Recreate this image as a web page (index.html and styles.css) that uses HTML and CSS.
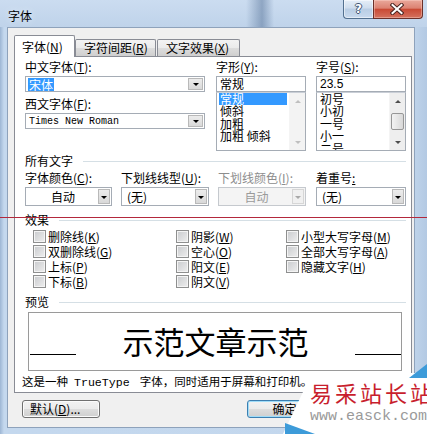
FILE: index.html
```html
<!DOCTYPE html>
<html lang="zh-CN">
<head>
<meta charset="utf-8">
<title>字体</title>
<link rel="stylesheet" href="styles.css">
</head>
<body>
<div class="window">
  <div class="titlebar">
    <span class="title">字体</span>
    <div class="caption">
      <div class="cap-help"><span class="qmark">?</span></div>
      <div class="cap-close">
        <svg width="14" height="12" viewBox="0 0 14 12">
          <path d="M2.5 2 L11.5 10 M11.5 2 L2.5 10" stroke="#4a2420" stroke-width="4" stroke-linecap="square"/>
          <path d="M2.5 2 L11.5 10 M11.5 2 L2.5 10" stroke="#ffffff" stroke-width="2" stroke-linecap="square"/>
        </svg>
      </div>
    </div>
  </div>
  <div class="client">
    <div class="tabs">
      <div class="tab active t1">字体(<u>N</u>)</div>
      <div class="tab t2">字符间距(<u>R</u>)</div>
      <div class="tab t3">文字效果(<u>X</u>)</div>
    </div>
    <div class="panel">
      <div class="toprow">
        <div class="col-left">
          <div class="lbl">中文字体(<u>T</u>):</div>
          <div class="combo"><span class="cval"><span class="sel">宋体</span></span><span class="dd"></span></div>
          <div class="lbl lbl2">西文字体(<u>F</u>):</div>
          <div class="combo"><span class="cval mono">Times New Roman</span><span class="dd"></span></div>
        </div>
        <div class="col-style">
          <div class="lbl">字形(<u>Y</u>):</div>
          <div class="tbox">常规</div>
          <div class="lbox">
            <div class="items style-items">
              <div class="item selected">常规</div>
              <div class="item">倾斜</div>
              <div class="item">加粗</div>
              <div class="item">加粗 倾斜</div>
            </div>
            <div class="sbar disabled">
              <div class="sbtn"><span class="arr-up"></span></div>
              <div class="strack"></div>
              <div class="sbtn"><span class="arr-down"></span></div>
            </div>
          </div>
        </div>
        <div class="col-size">
          <div class="lbl">字号(<u>S</u>):</div>
          <div class="tbox num">23.5</div>
          <div class="lbox">
            <div class="items size-items">
              <div class="item">初号</div>
              <div class="item">小初</div>
              <div class="item">一号</div>
              <div class="item">小一</div>
              <div class="item">二号</div>
            </div>
            <div class="sbar">
              <div class="sbtn"><span class="arr-up"></span></div>
              <div class="strack"><div class="thumb"></div></div>
              <div class="sbtn"><span class="arr-down"></span></div>
            </div>
          </div>
        </div>
      </div>

      <div class="group">所有文字</div>
      <div class="fourrow">
        <div class="field f1">
          <div class="lbl">字体颜色(<u>C</u>):</div>
          <div class="ccombo"><span class="cval center">自动</span><span class="dd"></span></div>
        </div>
        <div class="field f2">
          <div class="lbl">下划线线型(<u>U</u>):</div>
          <div class="ccombo"><span class="cval pad">(无)</span><span class="dd"></span></div>
        </div>
        <div class="field f3 disabled-field">
          <div class="lbl">下划线颜色(<u>I</u>):</div>
          <div class="ccombo off"><span class="cval center">自动</span><span class="dd"></span></div>
        </div>
        <div class="field f4">
          <div class="lbl">着重号<u>:</u></div>
          <div class="ccombo"><span class="cval pad">(无)</span><span class="dd"></span></div>
        </div>
      </div>

      <div class="group g-effect">效果</div>
      <div class="effects">
        <div class="cbx"><span class="box"></span>删除线(<u>K</u>)</div>
        <div class="cbx"><span class="box"></span>双删除线(<u>G</u>)</div>
        <div class="cbx"><span class="box"></span>上标(<u>P</u>)</div>
        <div class="cbx"><span class="box"></span>下标(<u>B</u>)</div>
        <div class="cbx"><span class="box"></span>阴影(<u>W</u>)</div>
        <div class="cbx"><span class="box"></span>空心(<u>O</u>)</div>
        <div class="cbx"><span class="box"></span>阳文(<u>E</u>)</div>
        <div class="cbx"><span class="box"></span>阴文(<u>V</u>)</div>
        <div class="cbx"><span class="box"></span>小型大写字母(<u>M</u>)</div>
        <div class="cbx"><span class="box"></span>全部大写字母(<u>A</u>)</div>
        <div class="cbx"><span class="box"></span>隐藏文字(<u>H</u>)</div>
      </div>

      <div class="group g-preview">预览</div>
      <div class="preview">
        <span class="pline"></span>
        <span class="ptext">示范文章示范</span>
        <span class="pline"></span>
      </div>
      <div class="desc">这是一种<span class="dmono">TrueType</span>字体，同时适用于屏幕和打印机。</div>
    </div>

    <div class="buttons">
      <div class="btn b-default">默认(<u>D</u>)...</div>
      <div class="btn b-ok">确定</div>
      <div class="btn b-cancel">取消</div>
    </div>
  </div>

  <div class="redline"></div>

  <div class="watermark">
    <div class="wm-cn">易采站长站</div>
    <div class="wm-url">www.easck.com</div>
  </div>
  <span class="wm-tri-top"></span>
  <span class="wm-tri-bottom"></span>
</div>
</body>
</html>
```

FILE: styles.css
```css
* { box-sizing: border-box; }
html, body { margin: 0; padding: 0; }
body {
  width: 427px;
  height: 434px;
  overflow: hidden;
  font-family: "Noto Sans CJK SC", "Noto Sans", sans-serif;
  font-size: 12px;
  color: #000;
  background: #c2d6ec;
}
u { text-decoration: underline; text-underline-offset: 1px; }

.window {
  position: relative;
  width: 427px;
  height: 434px;
  display: flex;
  flex-direction: column;
  background: linear-gradient(90deg, #9db6d4 0, #c4d8ee 4px, #c3d7ed 96%, #b3c9e3 100%);
}

/* ---------- title bar ---------- */
.titlebar {
  height: 27px;
  display: flex;
  align-items: flex-start;
  padding-left: 8px;
  background:
    linear-gradient(90deg, rgba(0,0,0,0) 246px, rgba(70,100,140,0.45) 262px, rgba(0,0,0,0) 274px),
    linear-gradient(180deg, #cbdcf0 0, #bfd3ea 100%);
}
.title {
  margin-top: 8px;
  line-height: 15px;
  font-size: 12px;
  text-shadow: 0 0 6px #e8f0fa;
}
.caption {
  margin-left: auto;
  margin-right: 4px;
  display: flex;
}
.cap-help {
  width: 30px;
  height: 19px;
  border: 1px solid #53708f;
  border-top: none;
  border-right: none;
  border-radius: 0 0 0 4px;
  background: linear-gradient(180deg, #e5eef8 0, #cfdded 45%, #b9cde4 50%, #c9daee 100%);
  display: flex;
  align-items: center;
  justify-content: center;
  box-shadow: inset 0 0 0 1px rgba(255,255,255,0.5);
}
.qmark {
  font-family: "DejaVu Sans", sans-serif;
  font-weight: bold;
  font-size: 12px;
  line-height: 12px;
  color: #fff;
  text-shadow: 1px 0 0 #3f5673, -1px 0 0 #3f5673, 0 1px 0 #3f5673, 0 -1px 0 #3f5673;
}
.cap-close {
  width: 50px;
  height: 19px;
  border: 1px solid #6b302a;
  border-top: none;
  border-radius: 0 0 4px 0;
  background: linear-gradient(180deg, #e9a89b 0, #dc8272 45%, #c94a35 52%, #d4725f 100%);
  display: flex;
  align-items: center;
  justify-content: center;
  box-shadow: inset 0 0 0 1px rgba(255,220,210,0.4);
}
.cap-close svg { display: block; margin-left: -3px; }

/* ---------- client ---------- */
.client {
  margin: 0 12px 0 7px;
  height: 401px;
  border: 1px solid #8ea2bb;
  background: #f0f0f0;
  padding: 7px 2px 0 6px;
  display: flex;
  flex-direction: column;
}

.tabs {
  height: 21px;
  display: flex;
  align-items: flex-end;
}
.tab {
  height: 17px;
  border: 1px solid #898c95;
  border-bottom: none;
  border-radius: 2px 2px 0 0;
  padding: 0 0 0 7px;
  line-height: 15px;
  white-space: nowrap;
  background: linear-gradient(180deg, #f3f3f3 0, #ebebeb 50%, #dddddd 50%, #cfcfcf 100%);
}
.tab.active {
  height: 22px;
  margin-bottom: -1px;
  padding-top: 3px;
  background: #ffffff;
  position: relative;
  z-index: 1;
}
.t1 { width: 61px; }
.t2 { width: 81px; padding-left: 8px; }
.t3 { width: 83px; margin-left: 1px; padding-left: 8px; }

.panel {
  border: 1px solid #898c95;
  background: #ffffff;
  padding: 2px 5px 3px 10px;
  display: flex;
  flex-direction: column;
}

.lbl {
  height: 15px;
  line-height: 15px;
  white-space: nowrap;
}

.toprow { display: flex; }
.col-left { width: 180px; margin-right: 11px; }
.col-style { width: 90px; margin-right: 10px; }
.col-size { width: 90px; }
.col-left .combo { margin-top: 2px; }
.lbl2 { margin-top: 4px; }
.col-style .tbox, .col-size .tbox { margin-top: 2px; }

.combo {
  height: 16px;
  border: 1px solid #a5acb5;
  background: #fff;
  display: flex;
  align-items: center;
  padding: 1px;
}
.cval {
  flex: 1;
  line-height: 13px;
  padding-left: 1px;
  white-space: nowrap;
  overflow: hidden;
}
.cval.mono {
  font-family: "Liberation Mono", monospace;
  font-size: 10px;
  padding-left: 2px;
}
.sel {
  background: #3399ff;
  color: #fff;
  padding: 0 1px;
}
.dd {
  width: 15px;
  height: 12px;
  border: 1px solid #b9b9b9;
  background: linear-gradient(180deg, #ececec 0, #d9d9d9 100%);
  display: flex;
  align-items: center;
  justify-content: center;
}
.dd::after {
  content: "";
  border-left: 3px solid transparent;
  border-right: 3px solid transparent;
  border-top: 3px solid #000;
  margin-top: 1px;
}

.tbox {
  height: 16px;
  border: 1px solid #a5acb5;
  background: #fff;
  line-height: 14px;
  padding-left: 3px;
}
.tbox.num {
  font-family: "Liberation Sans", sans-serif;
  font-size: 12px;
}

.lbox {
  height: 59px;
  border: 1px solid #a5acb5;
  border-top-color: #c9ced6;
  background: #fff;
  display: flex;
  overflow: hidden;
}
.items {
  flex: 1;
  padding: 0 2px;
  overflow: hidden;
}
.size-items { padding-left: 2px; }
.item {
  height: 12.4px;
  line-height: 12.4px;
  padding-left: 1px;
  white-space: nowrap;
}
.item.selected {
  background: #3399ff;
  color: #fff;
}
.sbar {
  width: 16px;
  display: flex;
  flex-direction: column;
  background: #eeeeee;
  border-left: 1px solid #f4f4f4;
}
.sbar.disabled { background: #f3f3f3; }
.sbtn {
  height: 16px;
  display: flex;
  align-items: center;
  justify-content: center;
}
.strack { flex: 1; }
.thumb {
  margin: 4px auto 0;
  width: 13px;
  height: 17px;
  border: 1px solid #979797;
  border-radius: 2px;
  background: linear-gradient(90deg, #f3f3f3 0, #e6e6e6 50%, #d8d8d8 100%);
}
.arr-up {
  border-left: 3px solid transparent;
  border-right: 3px solid transparent;
  border-bottom: 3px solid #4d4d4d;
}
.arr-down {
  border-left: 3px solid transparent;
  border-right: 3px solid transparent;
  border-top: 3px solid #4d4d4d;
}
.disabled .arr-up { border-bottom-color: #bfbfbf; }
.disabled .arr-down { border-top-color: #bfbfbf; }

/* group titles */
.group {
  height: 15px;
  line-height: 15px;
  display: flex;
  align-items: center;
  margin-top: 2px;
  white-space: nowrap;
}
.group::after {
  content: "";
  flex: 1;
  height: 1px;
  background: #d5dfe5;
  margin-left: 10px;
  margin-top: 2px;
}

.fourrow { display: flex; margin-top: 2px; }
.field .ccombo { margin-top: 2px; }
.f1 { width: 87px; margin-right: 9px; }
.f2 { width: 88px; margin-right: 9px; }
.f3 { width: 88px; margin-right: 10px; }
.f4 { width: 90px; }
.disabled-field .lbl { color: #8d8d8d; }

.ccombo {
  height: 19px;
  border: 1px solid #a5acb5;
  background: #fff;
  display: flex;
  align-items: center;
  padding: 1px 1px 1px 1px;
}
.ccombo .cval { line-height: 15px; }
.ccombo .center { text-align: center; }
.ccombo .pad { padding-left: 4px; }
.ccombo .dd { width: 12px; height: 15px; }
.ccombo.off { background: #f4f4f4; border-color: #c5c9ce; color: #9a9a9a; }
.ccombo.off .dd { border-color: #d6d6d6; background: #f0f0f0; }
.ccombo.off .dd::after { border-top-color: #a8a8a8; }

.g-effect { margin-top: 6px; }

.effects {
  margin-top: 2px;
  padding-left: 8px;
  display: grid;
  grid-template-columns: 143px 110px 1fr;
  grid-template-rows: repeat(4, 15px);
  grid-auto-flow: column;
}
.cbx {
  display: flex;
  align-items: center;
  height: 15px;
  line-height: 15px;
  white-space: nowrap;
}
.box {
  width: 13px;
  height: 13px;
  margin-right: 2px;
  border: 1px solid #8e8f8f;
  background: linear-gradient(135deg, #c9cbce 0, #eeeeee 100%);
  box-shadow: inset 0 0 0 1px #f4f4f4;
}

.g-preview { margin-top: 5px; }

.preview {
  margin-top: 3px;
  margin-left: 3px;
  width: 374px;
  height: 59px;
  border: 1px solid #9a9a9a;
  background: #fff;
  display: flex;
  align-items: center;
  justify-content: space-between;
  padding-left: 1px;
}
.pline {
  width: 46px;
  height: 1px;
  background: #000;
  align-self: flex-end;
  margin-bottom: 15px;
}
.ptext {
  font-size: 31px;
  line-height: 31px;
  margin-bottom: 3px;
  white-space: nowrap;
}

.desc {
  margin-top: 3px;
  margin-left: -3px;
  height: 15px;
  line-height: 15px;
  font-size: 11.5px;
  white-space: nowrap;
}
.dmono {
  font-family: "Liberation Mono", monospace;
  font-size: 11.6px;
  margin: 0 10px 0 6px;
}

/* bottom buttons */
.buttons {
  display: flex;
  margin-top: 7px;
  padding-left: 8px;
  padding-right: 9px;
}
.btn {
  height: 18px;
  border: 1px solid #707070;
  border-radius: 3px;
  background: linear-gradient(180deg, #f2f2f2 0, #ebebeb 50%, #dddddd 50%, #cfcfcf 100%);
  box-shadow: inset 0 0 0 1px #fbfbfb;
  line-height: 16px;
  white-space: nowrap;
}
.b-default { width: 78px; padding-left: 7px; }
.b-ok {
  width: 75px;
  margin-left: auto;
  text-align: center;
  border-color: #3c7fb1;
  box-shadow: inset 0 0 0 1px #9fdcf8;
}
.b-cancel { width: 75px; margin-left: 6px; text-align: center; }

/* overlays */
.redline {
  position: absolute;
  left: 0;
  top: 217px;
  width: 427px;
  height: 1px;
  background: #b3283c;
}

.watermark {
  position: absolute;
  left: 283px;
  top: 373px;
  width: 144px;
  height: 61px;
  background: #ffffff;
  clip-path: polygon(29px 0, 144px 0, 144px 61px, 0 61px);
}
.wm-tri-top {
  position: absolute;
  right: 0;
  top: 364px;
  width: 0;
  height: 0;
  border-left: 18px solid transparent;
  border-bottom: 14px solid #3d9bd9;
}
.wm-tri-bottom {
  position: absolute;
  left: 285px;
  top: 423px;
  width: 0;
  height: 0;
  border-right: 30px solid transparent;
  border-bottom: 11px solid #3d9bd9;
}
.wm-cn {
  position: absolute;
  left: 27px;
  top: 7px;
  font-size: 22px;
  line-height: 24px;
  letter-spacing: 3px;
  color: #c81e2d;
  white-space: nowrap;
}
.wm-url {
  position: absolute;
  left: 27px;
  top: 36px;
  font-family: "Liberation Mono", monospace;
  font-size: 15px;
  line-height: 16px;
  color: #9a9a9a;
  white-space: nowrap;
}
```
